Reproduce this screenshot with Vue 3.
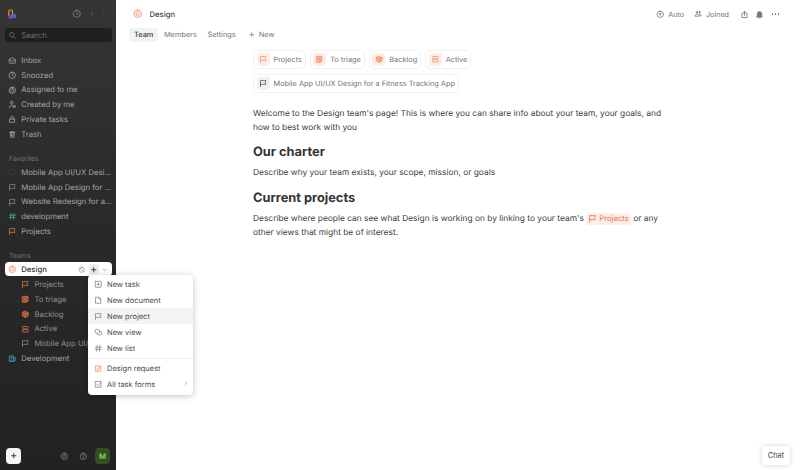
<script setup>
const icons = {
  inbox: ['M2.500 6.500 8 3l5.500 3.500v6a1 1 0 0 1-1 1h-9a1 1 0 0 1-1-1z', 'M2.500 6.800 8 10l5.500-3.200'],
  clock: ['M8 2a6 6 0 1 0 0 12A6 6 0 0 0 8 2z', 'M8 4.800V8l2.200 1.500'],
  target: ['M8 2a6 6 0 1 0 0 12A6 6 0 0 0 8 2z', 'M8 5a3 3 0 1 0 0 6 3 3 0 0 0 0-6z'],
  user: ['M7 2.500a2.500 2.500 0 1 0 0 5 2.500 2.500 0 0 0 0-5z', 'M2.500 14c0-2.500 2-4 4.500-4', 'M10 10.500h3.500v3H10z'],
  lock: ['M3.500 7.500h9v6h-9z', 'M5.500 7.500V5a2.500 2.500 0 0 1 5 0v2.500'],
  trash: ['M3 4.500h10', 'M6 4.500V2.800h4v1.700', 'M4.200 4.500 5 13.500h6l.8-9', 'M6.800 7v4M9.200 7v4'],
  flag: ['M2.800 14V3h10.400l-1.700 3.500 1.700 3.500H2.800'],
  hash: ['M6 2.500 4.800 13.500M11.200 2.500 10 13.500M2.800 6h11M2.300 10h11'],
  triage: ['M3 2.500h10v8l-3 3H3z', 'M5.500 6h5M5.500 9h2.500', 'M9.500 13.500v-3h3.500'],
  cube: ['M8 2 13.500 5v6L8 14l-5.500-3V5z', 'M2.500 5 8 8l5.500-3M8 8v6'],
  layers: ['M4.500 2.800h7a1.500 1.500 0 0 1 0 4.400h-7a1.500 1.500 0 0 1 0-4.400zM4.500 8.800h7a1.500 1.500 0 0 1 0 4.400h-7a1.500 1.500 0 0 1 0-4.400z'],
  design: ['M8 1.800a6.200 6.200 0 1 0 0 12.400A6.200 6.200 0 0 0 8 1.800z', 'M8 4.800 11 7l-1.100 3.400H6.100L5 7z'],
  dev: ['M2.500 13V3.500h8V13z', 'M10.500 6.500h3V13h-11', 'M5 6h3M5 9h3'],
  plusBox: ['M3 2.500h10a.6.6 0 0 1 .5.500v10a.6.6 0 0 1-.5.500H3a.6.6 0 0 1-.5-.500V3a.6.6 0 0 1 .5-.500z', 'M8 5.500v5M5.500 8h5'],
  doc: ['M3.500 2.500h6l3 3v8h-9z', 'M9.500 2.500v3h3'],
  view: ['M6 2.500 10 4.500v4L6 10.500 2 8.500v-4z', 'M10 5.500 14 7.500v4l-4 2-4-2v-1'],
  form: ['M3 3.500h7v1M3 3.500v10h10V8', 'M7 9.500 13 3l1 1-6 6.500-1.500.5z'],
  formCheck: ['M3 2.500h10v11H3z', 'M5.500 8.500 7.500 10.500 13.500 4'],
  plus: ['M8 3.500v9M3.500 8h9'],
  check: ['M8 2.500a5.500 5.500 0 1 0 0 11 5.500 5.500 0 0 0 0-11z', 'M4.200 4.200l7.600 7.600'],
  chev: ['M4.500 6.500 8 10l3.500-3.500'],
  right: ['M6.500 4.500 10 8l-3.500 3.500'],
  left: ['M9.500 4.500 6 8l3.500 3.500'],
  search: ['M7 2.800a4.200 4.200 0 1 0 0 8.400 4.200 4.200 0 0 0 0-8.400z', 'M10.200 10.200 13.500 13.500'],
  gear: ['M8 2a6 6 0 1 0 0 12A6 6 0 0 0 8 2z', 'M8 5.500a2.500 2.500 0 1 0 0 5 2.500 2.500 0 0 0 0-5z'],
  help: ['M8 2a6 6 0 1 0 0 12A6 6 0 0 0 8 2z', 'M6.200 6.300A1.900 1.900 0 1 1 8 8.700V9.500', 'M8 11v.6'],
  share: ['M5 6H3.500v7.500h9V6H11', 'M8 9.500V2.500M5.800 4.500 8 2.500l2.200 2'],
  bell: ['M4 11.500V7a4 4 0 0 1 8 0v4.500l1 1H3z', 'M7 14h2'],
  people: ['M5.500 5.500a1.500 1.500 0 1 0 0-3 1.500 1.500 0 0 0 0 3zM10.500 5.500a1.500 1.500 0 1 0 0-3 1.500 1.500 0 0 0 0 3z', 'M2 11c0-2 1.500-3 3.500-3s3 1 3 3zM10 8c2 0 4 1 4 3h-3.500'],
  auto: ['M8 2a6 6 0 1 0 0 12A6 6 0 0 0 8 2z', 'M8 6.500a1.500 1.500 0 1 0 0 3 1.500 1.500 0 0 0 0-3z'],
  blank: ['M3 3h10v10H3z']
}

const nav = [
  { label: 'Inbox', icon: 'inbox' },
  { label: 'Snoozed', icon: 'clock' },
  { label: 'Assigned to me', icon: 'target' },
  { label: 'Created by me', icon: 'user' },
  { label: 'Private tasks', icon: 'lock' },
  { label: 'Trash', icon: 'trash' }
]
const favorites = [
  { label: 'Mobile App UI/UX Desi...', icon: 'blank', tone: 'faint' },
  { label: 'Mobile App Design for ...', icon: 'flag', tone: 'grey' },
  { label: 'Website Redesign for a...', icon: 'flag', tone: 'grey' },
  { label: 'development', icon: 'hash', tone: 'teal' },
  { label: 'Projects', icon: 'flag', tone: 'orange' }
]
const teamItems = [
  { label: 'Projects', icon: 'flag', tone: 'orange' },
  { label: 'To triage', icon: 'triage', tone: 'orange solid' },
  { label: 'Backlog', icon: 'cube', tone: 'orange solid' },
  { label: 'Active', icon: 'layers', tone: 'orange' },
  { label: 'Mobile App UI/UX', icon: 'flag', tone: 'grey' }
]
const tabs = ['Team', 'Members', 'Settings']
const chips = [
  { label: 'Projects', icon: 'flag' },
  { label: 'To triage', icon: 'triage', solid: true },
  { label: 'Backlog', icon: 'cube', solid: true },
  { label: 'Active', icon: 'layers' },
  { label: 'Mobile App UI/UX Design for a Fitness Tracking App', icon: 'flag', grey: true }
]
const menuTop = [
  { label: 'New task', icon: 'plusBox' },
  { label: 'New document', icon: 'doc' },
  { label: 'New project', icon: 'flag', active: true },
  { label: 'New view', icon: 'view' },
  { label: 'New list', icon: 'hash' }
]
</script>

<template>
  <div class="app">
    <aside class="sidebar">
      <div class="topbar">
        <svg class="logo" viewBox="0 0 12 14" width="9" height="11">
          <rect x="1" y="1" width="5" height="9" rx="2" fill="none" stroke="#e8a020" stroke-width="1.500" />
          <rect x="1" y="7" width="5" height="6" rx="2" fill="#7a3fc0" />
          <rect x="5" y="6" width="6" height="6" rx="2.500" fill="#2f6fd0" />
          <circle cx="5.500" cy="8.500" r="1.500" fill="#d83a4a" />
        </svg>
        <span class="topbar-space"></span>
        <svg class="ico muted" viewBox="0 0 16 16"><path v-for="d in icons.clock" :key="d" :d="d" /></svg>
        <svg class="ico muted nav-arrow" viewBox="0 0 16 16"><path v-for="d in icons.left" :key="d" :d="d" /></svg>
        <svg class="ico dim nav-arrow" viewBox="0 0 16 16"><path v-for="d in icons.right" :key="d" :d="d" /></svg>
      </div>
      <div class="search">
        <svg class="ico" viewBox="0 0 16 16"><path v-for="d in icons.search" :key="d" :d="d" /></svg>
        <span>Search</span>
      </div>

      <nav class="group nav">
        <div v-for="n in nav" :key="n.label" class="row">
          <svg class="ico" viewBox="0 0 16 16"><path v-for="d in icons[n.icon]" :key="d" :d="d" /></svg>
          <span>{{ n.label }}</span>
        </div>
      </nav>

      <div class="section-label fav-label">Favorites</div>
      <div class="group">
        <div v-for="f in favorites" :key="f.label" class="row">
          <svg class="ico" :class="f.tone" viewBox="0 0 16 16"><path v-for="d in icons[f.icon]" :key="d" :d="d" /></svg>
          <span>{{ f.label }}</span>
        </div>
      </div>

      <div class="section-label teams-label">Teams</div>
      <div class="team-row">
        <svg class="ico orange-light" viewBox="0 0 16 16"><path v-for="d in icons.design" :key="d" :d="d" /></svg>
        <span class="team-name">Design</span>
        <svg class="ico small grey-dark" viewBox="0 0 16 16"><path v-for="d in icons.check" :key="d" :d="d" /></svg>
        <span class="team-plus">
          <svg class="ico small dark" viewBox="0 0 16 16"><path v-for="d in icons.plus" :key="d" :d="d" /></svg>
        </span>
        <svg class="ico small grey-dark team-chev" viewBox="0 0 16 16"><path v-for="d in icons.chev" :key="d" :d="d" /></svg>
      </div>
      <div class="group sub">
        <div v-for="t in teamItems" :key="t.label" class="row">
          <svg class="ico" :class="t.tone" viewBox="0 0 16 16"><path v-for="d in icons[t.icon]" :key="d" :d="d" /></svg>
          <span>{{ t.label }}</span>
        </div>
      </div>
      <div class="row dev-row">
        <svg class="ico blue" viewBox="0 0 16 16"><path v-for="d in icons.dev" :key="d" :d="d" /></svg>
        <span>Development</span>
      </div>

      <div class="sidebar-foot">
        <button class="add">
          <svg class="ico small dark" viewBox="0 0 16 16"><path v-for="d in icons.plus" :key="d" :d="d" /></svg>
        </button>
        <span class="foot-space"></span>
        <svg class="ico muted gear" viewBox="0 0 16 16"><path v-for="d in icons.gear" :key="d" :d="d" /></svg>
        <svg class="ico muted helpi" viewBox="0 0 16 16"><path v-for="d in icons.help" :key="d" :d="d" /></svg>
        <span class="avatar">M</span>
      </div>
    </aside>

    <main class="main">
      <header class="header">
        <svg class="ico head-ico orange-light" viewBox="0 0 16 16"><path v-for="d in icons.design" :key="d" :d="d" /></svg>
        <span class="head-title">Design</span>
        <span class="head-space"></span>
        <div class="head-action">
          <svg class="ico" viewBox="0 0 16 16"><path v-for="d in icons.auto" :key="d" :d="d" /></svg>
          <span>Auto</span>
        </div>
        <div class="head-action">
          <svg class="ico" viewBox="0 0 16 16"><path v-for="d in icons.people" :key="d" :d="d" /></svg>
          <span>Joined</span>
        </div>
        <svg class="ico head-btn share-btn" viewBox="0 0 16 16"><path v-for="d in icons.share" :key="d" :d="d" /></svg>
        <svg class="ico head-btn filled" viewBox="0 0 16 16"><path v-for="d in icons.bell" :key="d" :d="d" /></svg>
        <span class="more"><i></i><i></i><i></i></span>
      </header>

      <div class="tabs">
        <span v-for="(t, i) in tabs" :key="t" class="tab" :class="{ on: i === 0 }">{{ t }}</span>
        <span class="tab new-tab">
          <svg class="ico small" viewBox="0 0 16 16"><path v-for="d in icons.plus" :key="d" :d="d" /></svg>
          New
        </span>
      </div>

      <section class="content">
        <div class="chips">
          <div v-for="c in chips" :key="c.label" class="chip">
            <span class="chip-ico" :class="{ grey: c.grey }">
              <svg class="ico" :class="{ solid: c.solid }" viewBox="0 0 16 16"><path v-for="d in icons[c.icon]" :key="d" :d="d" /></svg>
            </span>
            <span>{{ c.label }}</span>
          </div>
        </div>
        <p class="first">Welcome to the Design team's page! This is where you can share info about your team, your goals, and how to best work with you</p>
        <h2 class="h-charter">Our charter</h2>
        <p>Describe why your team exists, your scope, mission, or goals</p>
        <h2 class="h-current">Current projects</h2>
        <p>
          Describe where people can see what Design is working on by linking to your team's
          <span class="inline-link"><svg class="ico" viewBox="0 0 16 16"><path v-for="d in icons.flag" :key="d" :d="d" /></svg>Projects</span>
          or any other views that might be of interest.
        </p>
      </section>

      <button class="chat">Chat</button>
    </main>

    <div class="menu">
      <div v-for="m in menuTop" :key="m.label" class="menu-item" :class="{ active: m.active }">
        <svg class="ico" viewBox="0 0 16 16"><path v-for="d in icons[m.icon]" :key="d" :d="d" /></svg>
        <span>{{ m.label }}</span>
      </div>
      <div class="menu-div"></div>
      <div class="menu-item">
        <svg class="ico orange-light" viewBox="0 0 16 16"><path v-for="d in icons.form" :key="d" :d="d" /></svg>
        <span>Design request</span>
      </div>
      <div class="menu-item">
        <svg class="ico" viewBox="0 0 16 16"><path v-for="d in icons.formCheck" :key="d" :d="d" /></svg>
        <span>All task forms</span>
        <svg class="ico small menu-arrow" viewBox="0 0 16 16"><path v-for="d in icons.right" :key="d" :d="d" /></svg>
      </div>
    </div>
  </div>
</template>

<style>
html, body { margin: 0; background: #fff; }
</style>

<style scoped>
.app {
  position: relative;
  display: flex;
  width: 800px;
  height: 470px;
  overflow: hidden;
  font-family: Inter, "Liberation Sans", sans-serif;
  font-size: 7.700px;
  color: #3a3a3a;
  text-rendering: geometricPrecision;
}
.ico {
  width: 8.600px;
  height: 8.600px;
  flex: none;
  fill: none;
  stroke: currentColor;
  stroke-width: 1.500;
  stroke-linecap: round;
  stroke-linejoin: round;
}
.ico.small { width: 7.500px; height: 7.500px; }
.ico.solid { fill: currentColor; fill-opacity: .6; }

.sidebar {
  width: 116px;
  height: 470px;
  flex: none;
  box-sizing: border-box;
  display: flex;
  flex-direction: column;
  padding: 0 4px;
  background: linear-gradient(180deg, #353535 0%, #2a2a2a 45%, #222 100%);
  color: #a4a4a4;
}
.topbar {
  height: 28px;
  display: flex;
  align-items: center;
  padding: 0 4.500px 0 4px;
  gap: 5px;
  color: #8a8a8a;
}
.topbar-space { flex: 1; }
.muted { color: #7e7e7e; }
.dim { color: #555; }
.nav-arrow { width: 7.500px; height: 7.500px; }
.topbar .muted:not(.nav-arrow) { margin-right: 1.500px; width: 9.500px; height: 9.500px; }
.search {
  height: 14px;
  margin-left: 1px;
  border-radius: 3px;
  background: #1f1f1f;
  display: flex;
  align-items: center;
  gap: 4.300px;
  padding: 0 3.400px;
  color: #707070;
}
.group { display: flex; flex-direction: column; }
.nav { margin-top: 11px; }
.row {
  height: 14.800px;
  display: flex;
  align-items: center;
  gap: 4.300px;
  padding-left: 4.400px;
  white-space: nowrap;
  overflow: hidden;
}
.faint { color: #3d3d3d; }
.grey { color: #828282; }
.teal { color: #3aa98c; }
.orange { color: #d9703f; }
.blue { color: #3a9dbd; }
.section-label { font-size: 6.900px; color: #767676; padding-left: 5px; height: 14.400px; line-height: 15.800px; }
.fav-label { margin-top: 8.800px; }
.teams-label { margin-top: 9.100px; }
.team-row {
  height: 13.800px;
  margin-left: .500px;
  border-radius: 4px;
  background: #fff;
  color: #333;
  display: flex;
  align-items: center;
  padding: 0 3.500px 0 3.900px;
  font-weight: 500;
}
.team-name { flex: 1; margin-left: 4.300px; }
.grey-dark { color: #8c8c8c; }
.dark { color: #333; stroke-width: 2; }
.team-plus {
  width: 10px;
  height: 10px;
  margin: 0 2.500px 0 3px;
  background: #eee;
  border-radius: 2px;
  display: flex;
  align-items: center;
  justify-content: center;
}
.sub { margin-top: .800px; color: #8f8f8f; }
.sub .row { padding-left: 17px; gap: 4.800px; }
.sidebar-foot {
  margin-top: auto;
  height: 16px;
  margin-bottom: 6px;
  display: flex;
  align-items: center;
  padding: 0 2px;
}
.add {
  width: 15px;
  height: 16px;
  padding: 0;
  border: 0;
  border-radius: 4px;
  background: #f4f4f4;
  display: flex;
  align-items: center;
  justify-content: center;
}
.foot-space { flex: 1; }
.gear { margin-right: 10.500px; }
.helpi { margin-right: 7px; }
.avatar {
  width: 15px;
  height: 16px;
  border-radius: 4px;
  background: #354d25;
  color: #8fd14f;
  font-weight: 600;
  display: flex;
  align-items: center;
  justify-content: center;
}

.main { position: relative; flex: 1; min-width: 0; display: flex; flex-direction: column; }
.header {
  height: 28px;
  display: flex;
  align-items: center;
  padding: 0 21px 0 16.500px;
  color: #757575;
}
.head-ico { width: 9.500px; height: 9.500px; }
.orange-light { color: #f4926a; }
.head-title { margin-left: 7.500px; font-size: 7.700px; font-weight: 500; color: #444; }
.head-space { flex: 1; }
.head-action { display: flex; align-items: center; gap: 3.800px; margin-right: 9.700px; font-size: 7.200px; }
.head-action + .head-action { margin-right: 11px; }
.head-action .ico { width: 8.500px; height: 8.500px; }
.head-btn { margin-right: 7px; width: 9px; height: 9px; }
.share-btn { margin-right: 6px; }
.filled { fill: currentColor; }
.more { display: flex; gap: 1.500px; margin-left: .500px; }
.more i { width: 1.500px; height: 1.500px; border-radius: 50%; background: #666; }
.tabs { display: flex; align-items: center; padding-left: 13px; height: 14px; gap: .500px; color: #777; font-size: 7.400px; }
.tab {
  height: 14px;
  line-height: 14px;
  padding: 0 5px;
  border-radius: 3px;
  display: flex;
  align-items: center;
  gap: 3.500px;
}
.tab.on { background: #f3f3f3; color: #3a3a3a; font-weight: 500; }
.new-tab { margin-left: 1.500px; }

.content {
  width: 414px;
  margin-left: 137px;
  padding-top: 8px;
  font-size: 8.400px;
  line-height: 14px;
  color: #3c3c3c;
}
.chips { display: flex; flex-wrap: wrap; gap: 5px 4px; width: 300px; font-size: 7.350px; line-height: normal; color: #757575; }
.chip {
  height: 19px;
  box-sizing: border-box;
  display: flex;
  align-items: center;
  gap: 4px;
  padding: 0 3px 0 2.500px;
  border: 1px solid #f1f1f1;
  border-radius: 5px;
  white-space: nowrap;
}
.chip-ico {
  width: 13px;
  height: 13px;
  border-radius: 3px;
  background: #feeee6;
  color: #f4926a;
  display: flex;
  align-items: center;
  justify-content: center;
}
.chip-ico.grey { background: #f1f1f1; color: #555; }
.chip-ico .ico { width: 8.500px; height: 8.500px; }
p { margin: 0; }
.first { margin-top: 13.500px; }
h2 { margin: 0; font-size: 12.800px; line-height: 18px; font-weight: 700; color: #333; }
.h-charter { margin-top: 9.600px; margin-bottom: 4px; }
.h-current { margin-top: 10.400px; margin-bottom: 3.500px; }
.inline-link {
  display: inline-flex;
  align-items: center;
  gap: 2px;
  height: 12px;
  padding: 0 2px;
  margin: 0;
  vertical-align: -2.500px;
  border-radius: 3px;
  background: #feefe8;
  color: #e8774a;
  font-size: 7.700px;
  line-height: 12px;
}
.inline-link .ico { width: 9px; height: 9px; }
.chat {
  position: absolute;
  right: 10px;
  bottom: 5px;
  width: 28px;
  height: 19px;
  padding: 0;
  border: 0;
  border-radius: 4px;
  background: #fff;
  box-shadow: 0 0 5px rgba(0, 0, 0, .18);
  font: inherit;
  font-size: 7.400px;
  color: #444;
}

.menu {
  position: absolute;
  left: 88px;
  top: 275px;
  width: 105px;
  box-sizing: border-box;
  padding: 1.300px 0 2.600px;
  background: #fff;
  border-radius: 4px;
  box-shadow: 0 1px 6px rgba(0, 0, 0, .25);
  color: #4a4a4a;
  font-size: 7.500px;
}
.menu-item {
  height: 16px;
  display: flex;
  align-items: center;
  gap: 4.400px;
  padding: 0 4px 0 6px;
}
.menu-item .ico:not(.orange-light):not(.menu-arrow) { color: #8a8a8a; }
.menu-item.active { background: #f4f4f4; }
.menu-div { height: 1px; margin: 1.500px 0 1.300px; background: #efefef; }
.menu-arrow { margin-left: auto; color: #999; }
</style>
